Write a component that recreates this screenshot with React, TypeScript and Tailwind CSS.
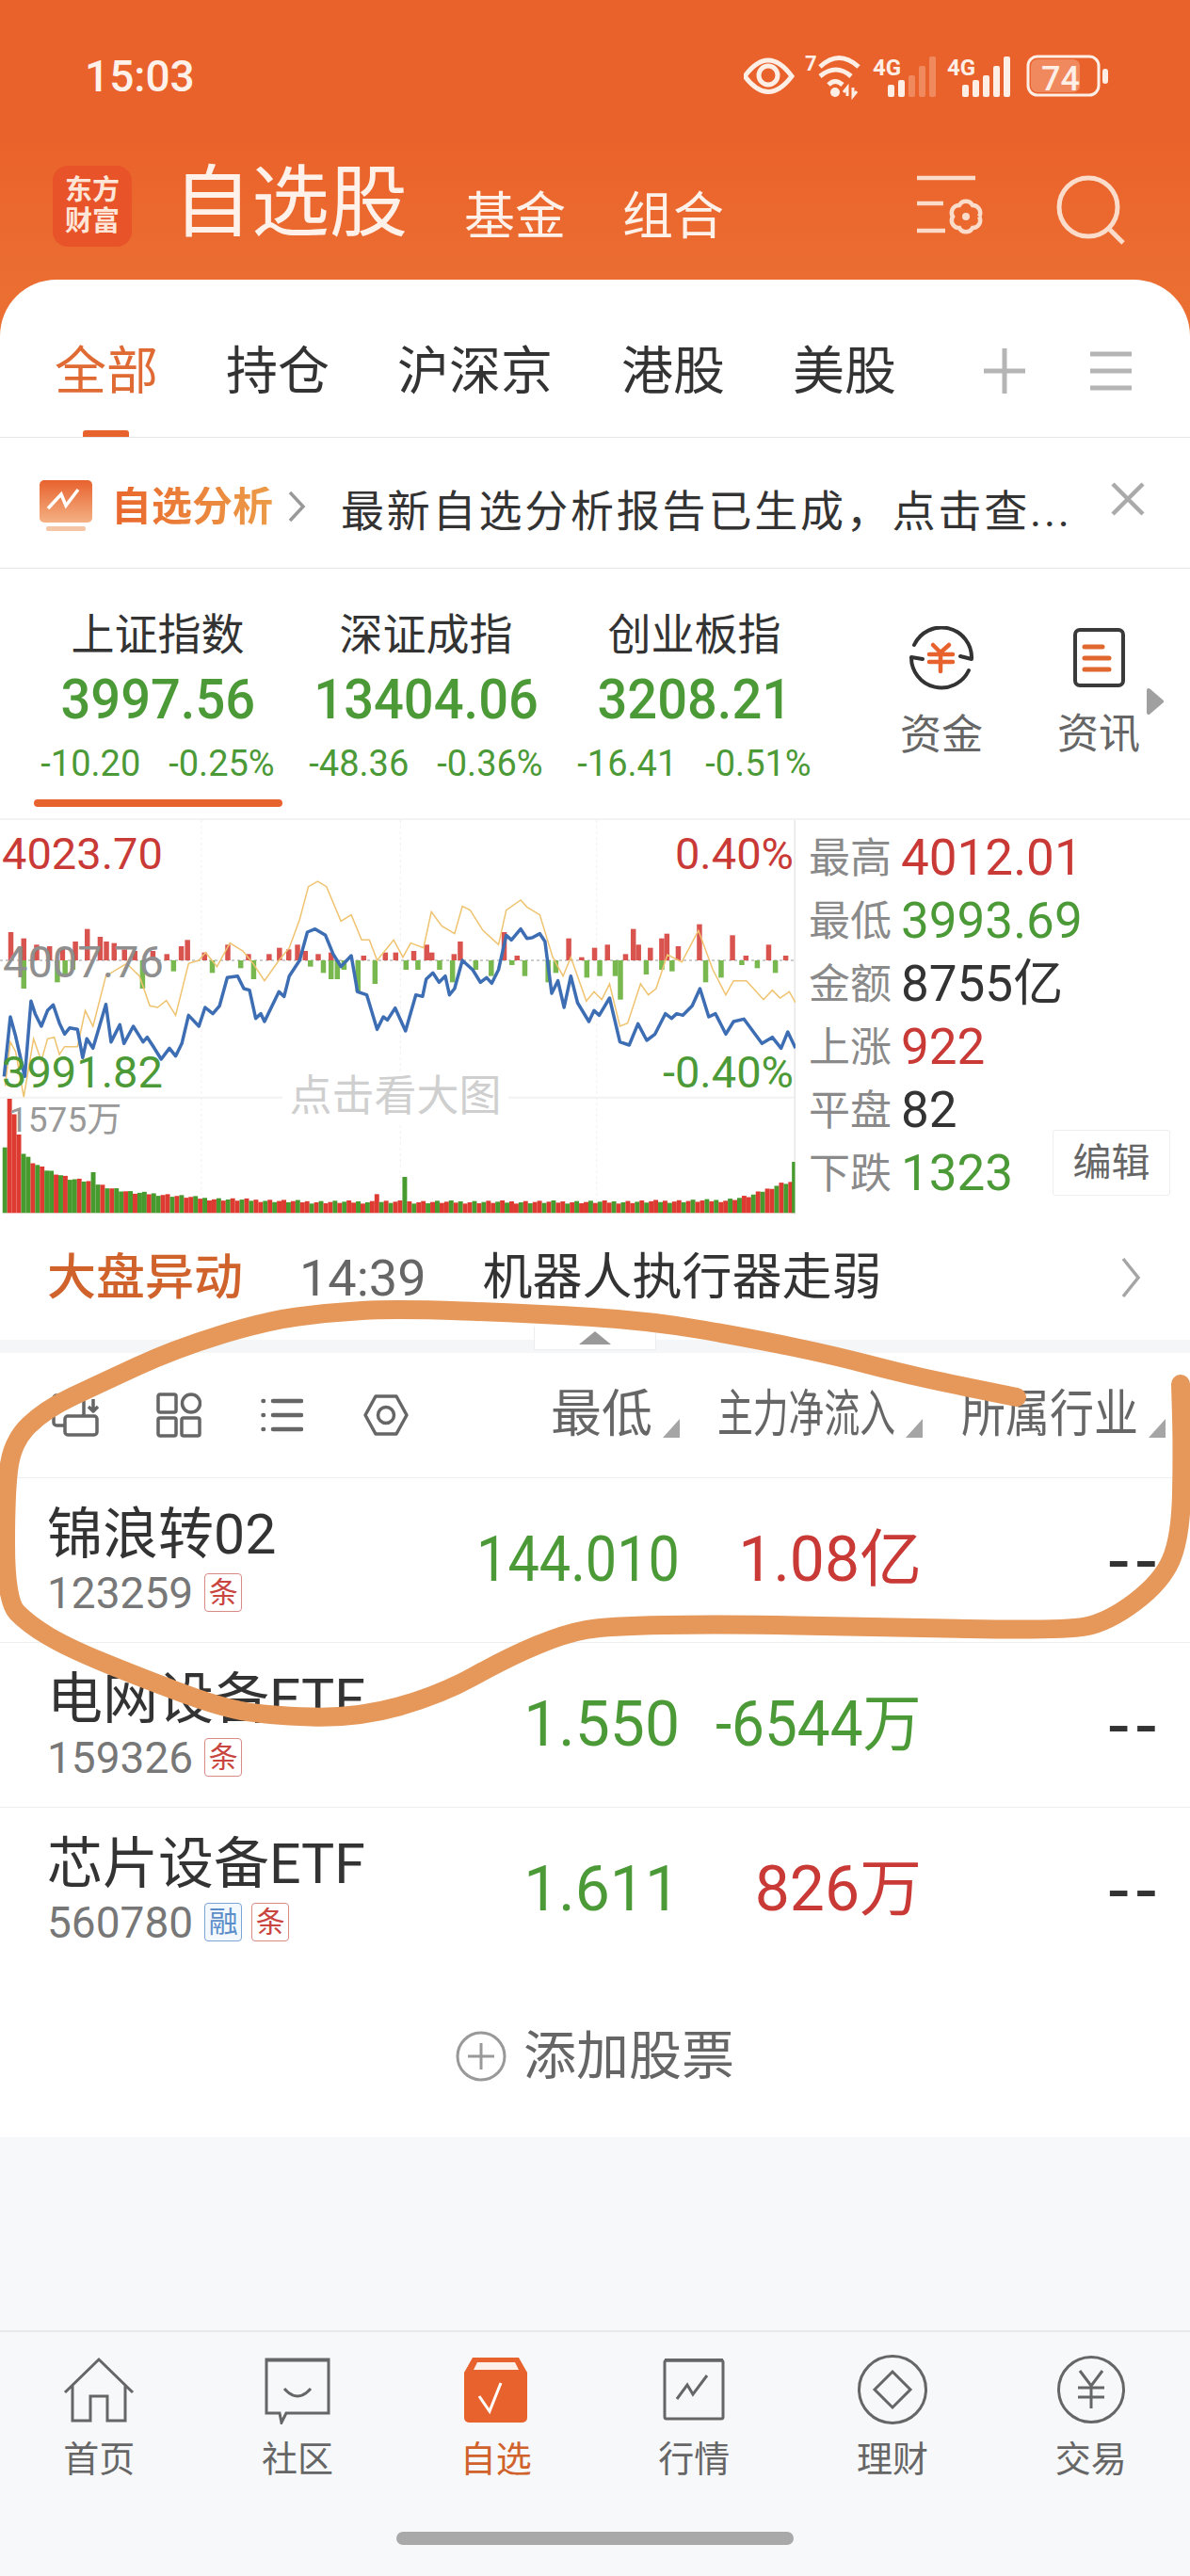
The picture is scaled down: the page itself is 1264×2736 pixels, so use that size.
const green = 'text-[#4c9a37]';
const red = 'text-[#c93a37]';

const bluePts = '8,850 20,660 30,720 48,850 60,610 68,650 80,690 92,640 103,622 115,680 125,715 135,695 150,700 160,790 168,730 180,760 205,620 215,740 232,685 240,745 258,690 277,740 285,725 295,750 312,795 328,760 340,785 352,745 365,655 385,690 397,630 412,650 425,625 440,535 460,530 472,570 483,575 495,665 505,650 512,675 540,580 550,595 560,530 580,480 595,390 610,380 630,400 645,460 660,500 680,465 692,580 710,590 730,700 742,660 750,670 765,632 785,705 805,590 818,595 825,540 838,520 850,550 862,530 870,590 880,570 895,480 915,510 930,550 942,535 952,553 965,510 980,400 990,415 1008,380 1020,410 1030,408 1045,395 1055,420 1068,585 1080,545 1092,630 1105,530 1118,615 1140,675 1150,640 1160,655 1180,600 1200,740 1218,750 1235,682 1252,735 1268,715 1288,650 1300,665 1310,650 1322,655 1340,625 1355,570 1372,660 1385,650 1405,715 1420,675 1440,667 1475,745 1495,725 1512,760 1525,708 1540,760';
const yellowPts = '10,880 20,740 30,770 46,915 65,730 80,800 92,730 105,725 115,780 125,755 150,755 165,640 180,690 205,530 245,490 270,530 290,625 305,630 322,608 340,655 365,490 385,480 398,455 420,500 445,425 470,450 490,490 512,545 540,480 560,440 580,350 597,245 615,228 632,245 660,355 680,335 700,415 715,415 730,480 745,450 762,415 780,470 795,425 820,440 835,325 855,370 880,395 895,308 910,320 935,385 965,430 980,320 1008,288 1020,310 1045,335 1070,470 1090,530 1105,470 1135,610 1150,580 1165,605 1180,555 1200,690 1215,680 1240,555 1255,590 1270,570 1292,462 1320,485 1352,385 1380,510 1405,590 1420,545 1445,545 1478,605 1495,575 1510,600 1528,580 1540,615';

const redBars = [[20,90],[45,70],[70,50],[95,45],[120,40],[145,60],[168,100],[193,75],[205,60],[220,55],[240,35],[260,30],[295,30],[322,20],[350,45],[362,65],[395,25],[440,50],[480,20],[520,20],[540,40],[558,35],[575,50],[590,30],[615,20],[640,25],[703,15],[745,25],[765,25],[800,30],[825,50],[835,25],[878,20],[890,60],[975,90],[1000,15],[1100,70],[1125,10],[1150,40],[1175,50],[1210,20],[1225,100],[1235,50],[1258,40],[1280,70],[1290,85],[1312,45],[1353,115],[1417,80],[1443,15],[1487,50],[1520,15]];
const greenBars = [[45,90],[110,70],[125,50],[140,30],[275,90],[335,35],[410,40],[465,25],[490,60],[600,20],[625,40],[640,60],[652,60],[665,30],[692,100],[725,75],[785,30],[808,30],[850,30],[875,70],[920,30],[950,50],[990,15],[1015,50],[1060,70],[1075,40],[1135,55],[1160,50],[1190,50],[1200,125],[1250,45],[1280,30],[1300,35],[1365,70],[1395,55],[1435,15],[1465,25],[1500,40]];

const volStops = [[0,130],[14,365],[30,270],[40,190],[60,160],[80,140],[100,130],[130,110],[170,100],[210,80],[250,65],[300,60],[400,45],[600,35],[900,35],[1200,35],[1400,40],[1450,55],[1480,75],[1510,95],[1530,100]];

const volumeAt = (x: number) => {
  for (let i = 1; i < volStops.length; i++) {
    const [x0, h0] = volStops[i - 1];
    const [x1, h1] = volStops[i];
    if (x <= x1) return h0 + ((h1 - h0) * (x - x0)) / (x1 - x0);
  }
  return 40;
};

const volumes = Array.from({ length: 170 }, (_, i) => {
  const x = 5 + i * 9;
  const wobble = ((i * 37) % 11) - 5;
  let h = volumeAt(x) + wobble;
  if (Math.abs(x - 779) < 5) h = 115;
  if (Math.abs(x - 725) < 5) h = 60;
  if (Math.abs(x - 176) < 5) h = 130;
  const isRed = x < 25 ? x > 10 : (i * 13) % 5 < 3 === x > 300;
  return { x, h, isRed };
});

const strokePts: [number, number][] = [[1080,1484],[1010,1470],[952,1457],[887,1440],[806,1423],[693,1403],[565,1395],[419,1390],[350,1394],[282,1403],[185,1433],[105,1470],[48,1497],[14,1530],[6,1580],[6,1700],[30,1725],[72,1750],[145,1780],[230,1812],[282,1822],[379,1825],[468,1800],[540,1760],[600,1735],[645,1727],[766,1725],[927,1728],[1129,1732],[1177,1723],[1234,1680],[1254,1633],[1256,1540],[1254,1470]];

const smooth = (p: [number, number][]) => {
  let d = `M${p[0][0]} ${p[0][1]}`;
  for (let i = 1; i < p.length - 1; i++) {
    const mx = (p[i][0] + p[i + 1][0]) / 2;
    const my = (p[i][1] + p[i + 1][1]) / 2;
    d += ` Q${p[i][0]} ${p[i][1]} ${mx} ${my}`;
  }
  const last = p[p.length - 1];
  return `${d} L${last[0]} ${last[1]}`;
};

// six-lobed gear outline
const gearPath = (cx: number, cy: number) => {
  const pts = Array.from({ length: 6 }, (_, i) => {
    const a = (Math.PI / 3) * i;
    return `${(cx + 14 * Math.cos(a)).toFixed(1)} ${(cy + 14 * Math.sin(a)).toFixed(1)}`;
  });
  return `M${pts[0]} ` + [1, 2, 3, 4, 5, 0].map((i) => `A8 8 0 0 1 ${pts[i]}`).join(' ');
};

const StatusIcons = () => (
  <svg width="387" height="50" viewBox="790 56 387 50" fill="none">
    <path d="M791 81 Q816 47 841 81 Q816 114 791 81 Z" stroke="#fdeee6" strokeWidth="5" />
    <circle cx="816" cy="80" r="10" stroke="#fdeee6" strokeWidth="5" />
    <text x="855" y="75" fill="#fdeee6" fontSize="22" fontWeight="700">7</text>
    <path d="M871 71 Q891 52 912 71" stroke="#fdeee6" strokeWidth="5" />
    <path d="M871 80 Q888 66 904 80" stroke="#fdeee6" strokeWidth="5" transform="translate(0 1)" />
    <path d="M880 90 Q887 83 895 90" stroke="#fdeee6" strokeWidth="5" />
    <circle cx="887" cy="98" r="5" fill="#fdeee6" />
    <path d="M900 102 V93 L896 98 M906 93 V102 L910 97" stroke="#fdeee6" strokeWidth="3" />
    <text x="927" y="80" fill="#fdeee6" fontSize="24" fontWeight="700">4G</text>
    {[[943, 90], [954, 85], [965, 80], [976, 70], [987, 60]].map(([x, y], i) => (
      <rect key={x} x={x} y={y} width="7" height={103 - y} rx="2" fill={i < 2 ? '#fdeee6' : '#f08a5e'} />
    ))}
    <text x="1006" y="80" fill="#fdeee6" fontSize="24" fontWeight="700">4G</text>
    {[[1022, 90], [1033, 85], [1044, 80], [1055, 70], [1066, 60]].map(([x, y]) => (
      <rect key={x} x={x} y={y} width="7" height={103 - y} rx="2" fill="#fdeee6" />
    ))}
    <rect x="1092" y="60" width="75" height="41" rx="10" stroke="#fdeee6" strokeWidth="3" />
    <rect x="1095" y="63" width="52" height="35" rx="7" fill="#f08a5e" />
    <rect x="1171" y="73" width="6" height="16" rx="3" fill="#fdeee6" />
    <text x="1106" y="96" fill="#fdeee6" fontSize="36" fontWeight="500">74</text>
  </svg>
);

const GearList = () => (
  <svg width="74" height="68" viewBox="0 0 74 68" fill="none" stroke="#fbdccb" strokeWidth="4.5">
    <path d="M0 3 H62 M0 30 H28 M0 59 H30" />
    <path d={gearPath(52, 44)} />
    <circle cx="52" cy="44" r="4" fill="#fbdccb" stroke="none" />
  </svg>
);

const Search = () => (
  <svg width="74" height="74" viewBox="0 0 74 74" fill="none" stroke="#fbdccb" strokeWidth="5">
    <circle cx="34" cy="34" r="31" />
    <path d="M56 57 L71 72" />
  </svg>
);

const AnalysisIcon = () => (
  <svg width="56" height="54" viewBox="0 0 56 54" fill="none">
    <defs>
      <linearGradient id="ai" x1="0" y1="0" x2="0" y2="1">
        <stop offset="0" stopColor="#e8622e" />
        <stop offset="1" stopColor="#f4b184" />
      </linearGradient>
    </defs>
    <rect x="0" y="0" width="56" height="45" rx="5" fill="url(#ai)" />
    <path d="M9 30 L23 15 L28 27 L41 10" stroke="#fff" strokeWidth="3.5" />
    <rect x="7" y="49" width="42" height="5" rx="2" fill="#f4c6a6" />
  </svg>
);

const FundIcon = () => (
  <svg width="68" height="70" viewBox="0 0 68 70" fill="none" strokeLinecap="round" strokeLinejoin="round">
    <path d="M5 20 A32 32 0 0 1 66 35 L54 32" stroke="#333" strokeWidth="4" />
    <path d="M63 47 A32 32 0 0 1 2 33 L14 35" stroke="#333" strokeWidth="4" />
    <path d="M25 20 L33 28 L42 20 M21 30 H46 M21 38 H46 M33 28 V48" stroke="#e8622e" strokeWidth="4.5" />
  </svg>
);

const NewsIcon = () => (
  <svg width="55" height="63" viewBox="0 0 55 63" fill="none" strokeLinecap="round">
    <rect x="2" y="2" width="51" height="59" rx="5" stroke="#3a3a3a" strokeWidth="4" />
    <path d="M12 20 H31 M12 32 H38 M12 44 H38" stroke="#e0682f" strokeWidth="5" />
  </svg>
);

const ToolIcon = ({ kind }: { kind: number }) => {
  if (kind === 0)
    return (
      <svg width="50" height="46" viewBox="0 0 50 46" fill="none" stroke="#666" strokeWidth="3.5" strokeLinejoin="round">
        <rect x="2" y="2" width="32" height="32" rx="3" />
        <rect x="14" y="24" width="34" height="20" rx="3" fill="#fff" />
        <path d="M44 6 V18 M39 14 L44 19 L49 14" />
      </svg>
    );
  if (kind === 1)
    return (
      <svg width="48" height="48" viewBox="0 0 48 48" fill="none" stroke="#666" strokeWidth="3.5" strokeLinejoin="round">
        <rect x="2" y="2" width="19" height="19" rx="2" />
        <circle cx="37" cy="11.5" r="9.5" />
        <rect x="2" y="27" width="19" height="19" rx="2" />
        <rect x="27" y="27" width="19" height="19" rx="2" />
      </svg>
    );
  if (kind === 2)
    return (
      <svg width="45" height="36" viewBox="0 0 45 36" fill="none" stroke="#666" strokeWidth="4.5" strokeLinecap="round">
        <path d="M2.5 3 H3 M13 3 H43 M2.5 18 H3 M13 18 H43 M2.5 33 H3 M13 33 H43" />
      </svg>
    );
  return (
    <svg width="48" height="44" viewBox="0 0 48 44" fill="none" stroke="#666" strokeWidth="3.5">
      <path d="M13 2 H35 L46 22 L35 42 H13 L2 22 Z" strokeLinejoin="round" />
      <circle cx="24" cy="22" r="8.5" />
    </svg>
  );
};

const SortMark = () => (
  <svg width="18" height="20" viewBox="0 0 18 20" className="shrink-0 ml-[11px] mb-[3px]">
    <path d="M18 0 V20 H0 Z" fill="#a5a5a5" />
  </svg>
);

const NavIcon = ({ kind }: { kind: number }) => {
  const line = { fill: 'none', stroke: '#666', strokeWidth: 3 };
  if (kind === 0)
    return (
      <svg width="76" height="72" viewBox="0 0 76 72">
        <path {...line} d="M2 38 L38 3 L74 38 M10 30 V68 H29 V42 H47 V68 H66 V30" />
      </svg>
    );
  if (kind === 1)
    return (
      <svg width="76" height="72" viewBox="0 0 76 72">
        <path {...line} d="M5 3 H71 V60 H26 L21 70 L19 60 H5 Z" />
        <rect x="5" y="2" width="66" height="3.5" fill="#666" />
        <path {...line} d="M24 34 Q38 50 52 34" />
      </svg>
    );
  if (kind === 2)
    return (
      <svg width="76" height="72" viewBox="0 0 76 72">
        <path d="M13 1 H62 L71 17 V20 H4 V17 Z" fill="#e8622e" />
        <path d="M18 6 H58 L63 16 H13 Z" fill="#fdf0e8" />
        <rect x="4" y="14" width="67" height="56" rx="5" fill="#e8622e" />
        <path d="M20 42 L31 58 L43 28" fill="none" stroke="#fff" strokeWidth="3" />
      </svg>
    );
  if (kind === 3)
    return (
      <svg width="76" height="72" viewBox="0 0 76 72">
        <rect {...line} x="7" y="4" width="62" height="62" rx="2" />
        <rect x="7" y="2" width="62" height="3.5" fill="#666" />
        <path {...line} d="M20 45 L31 30 L37 40 L52 20" />
      </svg>
    );
  if (kind === 4)
    return (
      <svg width="76" height="76" viewBox="0 0 76 76" className="-mt-[3px] -mb-[1px]">
        <circle {...line} cx="38" cy="38" r="35.5" />
        <path {...line} d="M38 19 L57 38 L38 57 L19 38 Z" />
      </svg>
    );
  return (
    <svg width="76" height="76" viewBox="0 0 76 76" className="-mt-[3px] -mb-[1px]">
      <circle {...line} cx="38" cy="38" r="34.5" />
      <path {...line} d="M26 18 L38 34 L50 18 M24 36 H52 M24 46 H52 M38 34 V58" />
    </svg>
  );
};

const Badge = ({ text, blue }: { text: string; blue?: boolean }) => (
  <span
    className={`inline-flex items-center justify-center w-[40px] h-[41px] rounded-[4px] border text-[31px] leading-none ${
      blue ? 'border-[#7aa3d6] text-[#5b8ec9] bg-[#f3f8fd]' : 'border-[#d98a85] text-[#c9453f]'
    }`}
  >
    {text}
  </span>
);

const indexes = [
  { name: '上证指数', value: '3997.56', a: '-10.20', b: '-0.25%', active: true },
  { name: '深证成指', value: '13404.06', a: '-48.36', b: '-0.36%' },
  { name: '创业板指', value: '3208.21', a: '-16.41', b: '-0.51%' },
];

const stats = [
  { k: '最高', v: '4012.01', c: red },
  { k: '最低', v: '3993.69', c: green },
  { k: '金额', v: '8755亿', c: 'text-[#333]' },
  { k: '上涨', v: '922', c: red },
  { k: '平盘', v: '82', c: 'text-[#333]' },
  { k: '下跌', v: '1323', c: green },
];

const stocks = [
  { name: '锦浪转02', code: '123259', low: '144.010', lowFit: 'scale-x-[0.9]', flow: '1.08亿', flowFit: '', up: true, tags: ['条'] },
  { name: '电网设备ETF', code: '159326', low: '1.550', lowFit: '', flow: '-6544万', flowFit: 'scale-x-[0.94]', up: false, tags: ['条'] },
  { name: '芯片设备ETF', code: '560780', low: '1.611', lowFit: '', flow: '826万', flowFit: '', up: true, tags: ['融', '条'] },
];

const navItems = ['首页', '社区', '自选', '行情', '理财', '交易'];

const Chart = () => (
  <div className="relative w-[845px] h-[420px] shrink-0 overflow-hidden">
    <svg width="845" height="420" viewBox="0 33 1540 1260" preserveAspectRatio="none" className="block">
      {[390, 775, 1155].map((x) => (
        <path key={x} d={`M${x} 33 V1290`} stroke="#f0f0f0" strokeWidth="1" strokeDasharray="3 3" vectorEffect="non-scaling-stroke" />
      ))}
      <path d="M0 917 H1540" stroke="#f2f2f2" strokeWidth="2" vectorEffect="non-scaling-stroke" />
      <path d="M0 480 H1540" stroke="#999" strokeWidth="1" strokeDasharray="3 3" vectorEffect="non-scaling-stroke" />
      <path d="M1539 33 V1290" stroke="#e8e8e8" strokeWidth="2" vectorEffect="non-scaling-stroke" />
      {redBars.map(([x, h]) => (
        <rect key={x} x={x - 4} y={480 - h} width="10" height={h} fill="#d9534f" />
      ))}
      {greenBars.map(([x, h]) => (
        <rect key={x} x={x - 4} y="480" width="10" height={h} fill="#78b84e" />
      ))}
      <polyline points={yellowPts} fill="none" stroke="#efc36f" strokeWidth="1.5" vectorEffect="non-scaling-stroke" />
      <polyline points={bluePts} fill="none" stroke="#3d6db3" strokeWidth="3.5" strokeLinejoin="round" vectorEffect="non-scaling-stroke" />
      {volumes.map((b) => (
        <rect key={b.x} x={b.x} y={1285 - b.h} width="9" height={b.h} fill={b.isRed ? '#dd3b31' : '#479a2d'} />
      ))}
      <rect x="1533" y="1122" width="6" height="163" fill="#479a2d" />
    </svg>
    <span className={`absolute left-[2px] top-[12px] text-[47px] leading-none ${red}`}>4023.70</span>
    <span className={`absolute right-[2px] top-[12px] text-[47px] leading-none ${red}`}>0.40%</span>
    <span className="absolute left-[3px] top-[127px] text-[47px] leading-none text-[#8f8f8f]">4007.76</span>
    <span className={`absolute left-[2px] top-[244px] text-[47px] leading-none ${green}`}>3991.82</span>
    <span className={`absolute right-[2px] top-[244px] text-[47px] leading-none ${green}`}>-0.40%</span>
    <span className="absolute left-[9px] top-[300px] text-[37px] leading-none text-[#999]">1575万</span>
    <span className="absolute left-[300px] top-[267px] w-[240px] h-[54px] bg-white text-center text-[45px] leading-[54px] text-[#cfcfcf]">
      点击看大图
    </span>
  </div>
);

export default function App() {
  return (
    <div className="relative w-[1264px] h-[2736px] overflow-hidden flex flex-col bg-[#f7f8fa] font-['Roboto','Noto_Sans_CJK_SC',sans-serif]">
      {/* orange header + tab bar */}
      <div className="bg-linear-to-b from-[#ea622b] from-30% to-[#ec7837]">
        <div className="h-[162px] flex items-center justify-between pl-[90px] pr-[87px]">
          <span className="text-[46px] leading-none font-medium text-[#fdf1ea]">15:03</span>
          <StatusIcons />
        </div>
        <div className="h-[135px] flex items-start pl-[56px]">
          <div className="mt-[14px] w-[84px] h-[86px] rounded-[16px] bg-[#e8532a] flex flex-col items-center justify-center text-[29px] leading-[33px] font-bold text-[#fde6d8]">
            <span>东方</span>
            <span>财富</span>
          </div>
          <span className="ml-[44px] mt-[12px] text-[83px] leading-[84px] text-[#fdf1ea]">自选股</span>
          <span className="ml-[60px] mt-[41px] text-[54px] leading-[56px] text-[#fdf1ea]">基金</span>
          <span className="ml-[60px] mt-[41px] text-[54px] leading-[56px] text-[#fdf1ea]">组合</span>
          <div className="ml-auto mr-[68px] mt-[24px] flex items-start gap-[74px]">
            <GearList />
            <Search />
          </div>
        </div>
        <div className="h-[168px] bg-white rounded-t-[60px] border-b border-[#e6e6e6] relative flex items-start pl-[58px] text-[55px] leading-none text-[#333]">
          <span className="mt-[70px] text-[#e06a33]">全部</span>
          <span className="mt-[70px] ml-[72px]">持仓</span>
          <span className="mt-[70px] ml-[72px]">沪深京</span>
          <span className="mt-[70px] ml-[73px]">港股</span>
          <span className="mt-[70px] ml-[72px]">美股</span>
          <span className="absolute left-[88px] bottom-0 w-[49px] h-[7px] rounded-t-[3px] bg-[#e8622e]" />
          <svg width="44" height="48" viewBox="0 0 44 48" className="ml-[93px] mt-[73px]" stroke="#b5b5b5" strokeWidth="5">
            <path d="M22 0 V48 M0 24 H44" />
          </svg>
          <svg width="44" height="42" viewBox="0 0 44 42" className="ml-[69px] mt-[76px]" stroke="#b5b5b5" strokeWidth="5">
            <path d="M0 3 H44 M0 21 H44 M0 39 H44" />
          </svg>
        </div>
      </div>

      {/* report notice */}
      <div className="h-[139px] shrink-0 bg-white border-b border-[#e6e6e6] flex items-center pl-[42px]">
        <div className="mt-[6px] flex">
          <AnalysisIcon />
        </div>
        <span className="ml-[20px] mt-[8px] text-[43px] leading-none font-bold bg-linear-to-r from-[#e8662c] to-[#ec9c48] bg-clip-text text-transparent">
          自选分析
        </span>
        <svg width="20" height="34" viewBox="0 0 20 34" fill="none" stroke="#999" strokeWidth="3.5" className="ml-[15px] mt-[8px]">
          <path d="M3 2 L17 17 L3 32" />
        </svg>
        <span className="ml-[37px] mt-[18px] w-[790px] whitespace-nowrap text-[46px] tracking-[2.8px] leading-none text-[#333]">
          最新自选分析报告已生成，点击查...
        </span>
        <svg width="36" height="36" viewBox="0 0 36 36" stroke="#aaa" strokeWidth="4.5" className="ml-[28px] mb-[8px]">
          <path d="M2 2 L34 34 M34 2 L2 34" />
        </svg>
      </div>

      {/* index row */}
      <div className="h-[267px] shrink-0 bg-white border-b-[2px] border-[#f3f3f3] flex pl-[25px]">
        {indexes.map((ix) => (
          <div key={ix.name} className="w-[285px] flex flex-col items-center pt-[46px]">
            <span className="h-[48px] text-[46px] leading-[48px] text-[#333]">{ix.name}</span>
            <span className={`h-[90px] text-[59px] font-medium leading-[90px] scale-x-[0.95] ${green}`}>{ix.value}</span>
            <div className={`h-[46px] flex gap-[30px] text-[38px] leading-[46px] whitespace-nowrap ${green}`}>
              <span>{ix.a}</span>
              <span>{ix.b}</span>
            </div>
            {ix.active && <span className="mt-[15px] w-[264px] h-[8px] rounded-full bg-[#e8622e]" />}
          </div>
        ))}
        <div className="ml-[86px] w-[68px] flex flex-col items-center pt-[61px]">
          <FundIcon />
          <span className="mt-[22px] whitespace-nowrap text-[44px] leading-[48px] text-[#666]">资金</span>
        </div>
        <div className="ml-[99px] w-[68px] flex flex-col items-center pt-[63px]">
          <NewsIcon />
          <span className="mt-[26px] whitespace-nowrap text-[44px] leading-[48px] text-[#666]">资讯</span>
        </div>
        <svg width="18" height="28" viewBox="0 0 18 28" className="ml-[17px] mt-[127px]">
          <path d="M2 2 L16 14 L2 26 Z" fill="#a0a0a0" stroke="#a0a0a0" strokeWidth="4" strokeLinejoin="round" />
        </svg>
      </div>

      {/* intraday chart */}
      <div className="h-[419px] shrink-0 bg-white flex relative">
        <Chart />
        <div className="pl-[14px] pt-[7px] flex flex-col">
          {stats.map((s) => (
            <div key={s.k} className="h-[67px] flex items-center whitespace-nowrap">
              <span className="text-[44px] leading-none text-[#8a8a8a]">{s.k}</span>
              <span className={`ml-[10px] text-[53px] leading-none ${s.c}`}>{s.v}</span>
            </div>
          ))}
        </div>
        <span className="absolute left-[1118px] top-[329px] w-[125px] h-[70px] border border-[#eee] rounded-[3px] bg-white text-center text-[41px] leading-[68px] text-[#666]">
          编辑
        </span>
      </div>

      {/* market alert */}
      <div className="h-[133px] shrink-0 bg-white flex items-center pl-[50px] whitespace-nowrap">
        <span className="mt-[2px] text-[52px] leading-none font-medium text-[#d0622c]">大盘异动</span>
        <span className="ml-[60px] mt-[2px] text-[54px] leading-none text-[#666]">14:39</span>
        <span className="ml-[60px] mt-[2px] text-[53px] leading-none text-[#333]">机器人执行器走弱</span>
        <svg width="22" height="44" viewBox="0 0 22 44" fill="none" stroke="#a5a5a5" strokeWidth="3.5" className="ml-auto mr-[52px]">
          <path d="M3 2 L19 22 L3 42" />
        </svg>
      </div>

      <div className="h-[14px] shrink-0 bg-[#f5f6f8] relative">
        <div className="absolute left-[567px] -top-[14px] w-[130px] h-[25px] bg-white border-b border-x border-[#eee] flex justify-center pt-[5px]">
          <svg width="34" height="14" viewBox="0 0 34 14">
            <path d="M17 0 L34 14 H0 Z" fill="#999" />
          </svg>
        </div>
      </div>

      {/* table head */}
      <div className="h-[133px] shrink-0 bg-white border-b border-[#eee] flex items-center pl-[55px] pr-[26px]">
        <div className="flex items-center">
          <ToolIcon kind={0} />
          <div className="ml-[61px] flex">
            <ToolIcon kind={1} />
          </div>
          <div className="ml-[63px] flex">
            <ToolIcon kind={2} />
          </div>
          <div className="ml-[64px] flex">
            <ToolIcon kind={3} />
          </div>
        </div>
        <div className="ml-auto flex text-[54px] leading-none text-[#666] whitespace-nowrap">
          <div className="w-[258px] flex justify-end items-end">
            <span>最低</span>
            <SortMark />
          </div>
          <div className="w-[258px] flex justify-end items-end">
            <span className="w-[188px] flex justify-end">
              <span className="origin-right scale-x-[0.7]">主力净流入</span>
            </span>
            <SortMark />
          </div>
          <div className="w-[258px] flex justify-end items-end">
            <span className="w-[188px] flex justify-end">
              <span className="origin-right scale-x-[0.87]">所属行业</span>
            </span>
            <SortMark />
          </div>
        </div>
      </div>

      {/* watchlist rows */}
      {stocks.map((s) => (
        <div key={s.code} className="h-[175px] shrink-0 bg-white border-b border-[#eee] flex items-center pl-[50px] pr-[30px]">
          <div className="w-[442px]">
            <div className="h-[60px] text-[59px] leading-[60px] text-[#333] whitespace-nowrap">{s.name}</div>
            <div className="mt-[9px] flex items-center gap-[12px]">
              <span className="text-[46px] leading-[46px] text-[#777]">{s.code}</span>
              <div className="flex gap-[10px]">
                {s.tags.map((t) => (
                  <Badge key={t} text={t} blue={t === '融'} />
                ))}
              </div>
            </div>
          </div>
          <div className={`w-[230px] flex justify-end text-[66px] leading-none ${green}`}>
            <span className={`origin-right ${s.lowFit}`}>{s.low}</span>
          </div>
          <div className={`w-[257px] flex justify-end text-[66px] leading-none whitespace-nowrap ${s.up ? red : green}`}>
            <span className={`origin-right ${s.flowFit}`}>{s.flow}</span>
          </div>
          <span className="flex-1 text-right -mt-[4px] font-['Liberation_Sans',sans-serif] text-[76px] leading-none tracking-[4px] text-[#333]">--</span>
        </div>
      ))}

      <div className="h-[176px] shrink-0 bg-white flex items-center justify-center -mt-px pt-[4px]">
        <svg width="54" height="54" viewBox="0 0 54 54" fill="none" stroke="#999" strokeWidth="3">
          <circle cx="27" cy="27" r="25" />
          <path d="M27 13 V41 M13 27 H41" />
        </svg>
        <span className="ml-[18px] text-[56px] leading-none text-[#666]">添加股票</span>
      </div>

      <div className="flex-1" />

      {/* bottom nav */}
      <div className="h-[261px] shrink-0 border-t-[2px] border-[#e8e9eb] flex flex-col items-center">
        <div className="w-full flex pt-[26px]">
          {navItems.map((label, i) => (
            <div key={label} className="flex-1 flex flex-col items-center">
              <NavIcon kind={i} />
              <span className={`mt-[13px] h-[48px] text-[38px] leading-[48px] ${i === 2 ? 'text-[#d0622c]' : 'text-[#666]'}`}>
                {label}
              </span>
            </div>
          ))}
        </div>
        <div className="mt-[53px] w-[422px] h-[14px] rounded-full bg-[#a9a9a9]" />
      </div>

      {/* hand-drawn marker stroke on top of the screenshot */}
      <svg width="1264" height="2736" viewBox="0 0 1264 2736" fill="none" className="absolute inset-0 pointer-events-none">
        <path d={smooth(strokePts)} stroke="#e5985a" strokeWidth="20" strokeLinecap="round" strokeLinejoin="round" />
      </svg>
    </div>
  );
}
